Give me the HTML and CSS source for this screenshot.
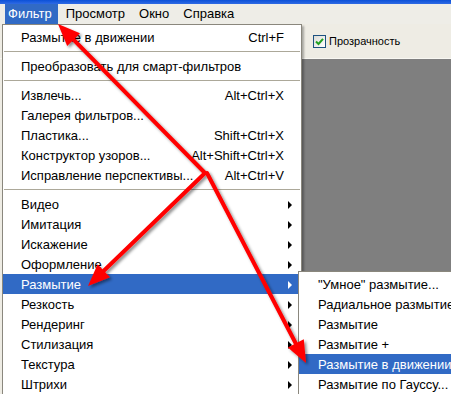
FILE: index.html
```html
<!DOCTYPE html>
<html lang="ru">
<head>
    <meta charset="UTF-8">
    <meta name="viewport" content="width=device-width, initial-scale=1.0">
    <title>Фильтр — Размытие</title>
    <link rel="stylesheet" href="styles.css">
</head>
<body>

    <div class="titlebar"></div>

    <nav class="menubar">
        <span class="menubar-item open">Фильтр</span>
        <span class="menubar-item">Просмотр</span>
        <span class="menubar-item">Окно</span>
        <span class="menubar-item">Справка</span>
    </nav>

    <div class="workspace">
        <div class="options-bar">
            <label class="check">
                <span class="check-box">
                    <svg width="9" height="9" viewBox="0 0 9 9"><path d="M1 4.5 L3.5 7 L8 1.8" fill="none" stroke="#21a121" stroke-width="2"/></svg>
                </span>
                Прозрачность
            </label>
        </div>
        <div class="canvas-area">
            <div class="toolbox"></div>
            <div class="canvas"></div>
        </div>
    </div>

    <!-- выпадающее меню "Фильтр" -->
    <ul class="menu filter-menu">
        <li><span>Размытие в движении</span><span class="key">Ctrl+F</span></li>
        <li class="sep"></li>
        <li><span>Преобразовать для смарт-фильтров</span></li>
        <li class="sep"></li>
        <li><span>Извлечь...</span><span class="key">Alt+Ctrl+X</span></li>
        <li><span>Галерея фильтров...</span></li>
        <li><span>Пластика...</span><span class="key">Shift+Ctrl+X</span></li>
        <li><span>Конструктор узоров...</span><span class="key">Alt+Shift+Ctrl+X</span></li>
        <li><span>Исправление перспективы...</span><span class="key">Alt+Ctrl+V</span></li>
        <li class="sep"></li>
        <li><span>Видео</span><span class="sub-arrow"></span></li>
        <li><span>Имитация</span><span class="sub-arrow"></span></li>
        <li><span>Искажение</span><span class="sub-arrow"></span></li>
        <li><span>Оформление</span><span class="sub-arrow"></span></li>
        <li class="active"><span>Размытие</span><span class="sub-arrow"></span></li>
        <li><span>Резкость</span><span class="sub-arrow"></span></li>
        <li><span>Рендеринг</span><span class="sub-arrow"></span></li>
        <li><span>Стилизация</span><span class="sub-arrow"></span></li>
        <li><span>Текстура</span><span class="sub-arrow"></span></li>
        <li><span>Штрихи</span><span class="sub-arrow"></span></li>
    </ul>

    <!-- подменю "Размытие" -->
    <ul class="menu blur-menu">
        <li><span>"Умное" размытие...</span></li>
        <li><span>Радиальное размытие...</span></li>
        <li><span>Размытие</span></li>
        <li><span>Размытие +</span></li>
        <li class="active"><span>Размытие в движении...</span></li>
        <li><span>Размытие по Гауссу...</span></li>
    </ul>

    <!-- красные стрелки поверх скриншота -->
    <svg class="arrows" width="451" height="394" viewBox="0 0 451 394">
        <defs>
            <filter id="shadow" x="-20%" y="-20%" width="140%" height="140%">
                <feDropShadow dx="2" dy="2" stdDeviation="1.5" flood-color="#000" flood-opacity="0.45"/>
            </filter>
        </defs>
        <g filter="url(#shadow)">
            <g stroke="#f00" stroke-width="4" stroke-linecap="round" fill="none">
                <path d="M205 173 L73.5 39.7"/>
                <path d="M205 173 L103.8 270.7"/>
                <path d="M207 173 L295.8 343.5"/>
            </g>
            <g fill="#f00">
                <polygon points="58,24 80,33.3 67.2,46"/>
                <polygon points="88,286 97.6,264.3 110,277.2"/>
                <polygon points="306,363 287.8,347.6 303.8,339.3"/>
            </g>
        </g>
    </svg>

</body>
</html>
```

FILE: styles.css
```css
body {
    margin: 0;
    height: 394px;
    overflow: hidden;
    font-family: "Liberation Sans", Arial, sans-serif;
    font-size: 13px;
    color: #000;
    background: #eeece4;
}

.titlebar {
    height: 4px;
    background: linear-gradient(#0b50d8, #2f6ae4);
}

.menubar {
    display: flex;
    height: 20px;
    line-height: 20px;
    padding-left: 5px;
    background: #eeede7;
}

.menubar-item {
    padding: 0 6px 0 3px;
    margin-right: 5px;
}

.menubar-item.open {
    background: #316ac5;
    color: #fff;
}

.workspace {
    display: flex;
    flex-direction: column;
    height: 370px;
}

.options-bar {
    height: 34px;
    display: flex;
    align-items: center;
    padding-left: 313px;
    border-bottom: 1px solid #f8f7f2;
    background: #eeece4;
    font-size: 11px;
}

.check {
    display: flex;
    align-items: center;
    gap: 3px;
}

.check-box {
    width: 11px;
    height: 11px;
    display: flex;
    align-items: center;
    justify-content: center;
    border: 1px solid #1c5180;
    background: linear-gradient(135deg, #dcdcd6, #fff);
}

.canvas-area {
    flex: 1;
    display: flex;
}

.toolbox {
    width: 40px;
    background: #eeece4;
}

.canvas {
    flex: 1;
    background: #7f7f7f;
}

.menu {
    position: absolute;
    margin: 0;
    padding: 2px 0;
    list-style: none;
    box-sizing: border-box;
    background: #fff;
    border: 1px solid #8a877d;
    box-shadow: 2px 2px 2px rgba(0, 0, 0, 0.3);
}

.menu li {
    display: flex;
    align-items: center;
    height: 20px;
    padding: 1px 17px 0 18px;
    box-sizing: border-box;
    white-space: nowrap;
}

.menu li.sep {
    height: 0;
    margin: 4px 1px;
    padding: 0;
    border-top: 1px solid #aca899;
}

.menu li.active {
    background: #316ac5;
    color: #fff;
}

.key {
    margin-left: auto;
}

.sub-arrow {
    margin-left: auto;
    margin-right: -8px;
    width: 0;
    height: 0;
    border-left: 4px solid #000;
    border-top: 4px solid transparent;
    border-bottom: 4px solid transparent;
}

.active .sub-arrow {
    border-left-color: #fff;
}

.filter-menu {
    top: 24px;
    left: 2px;
    width: 300px;
}

.blur-menu {
    top: 271px;
    left: 298px;
    width: 200px;
}

.blur-menu li {
    padding-left: 19px;
}

.arrows {
    position: absolute;
    top: 0;
    left: 0;
    pointer-events: none;
}
```
